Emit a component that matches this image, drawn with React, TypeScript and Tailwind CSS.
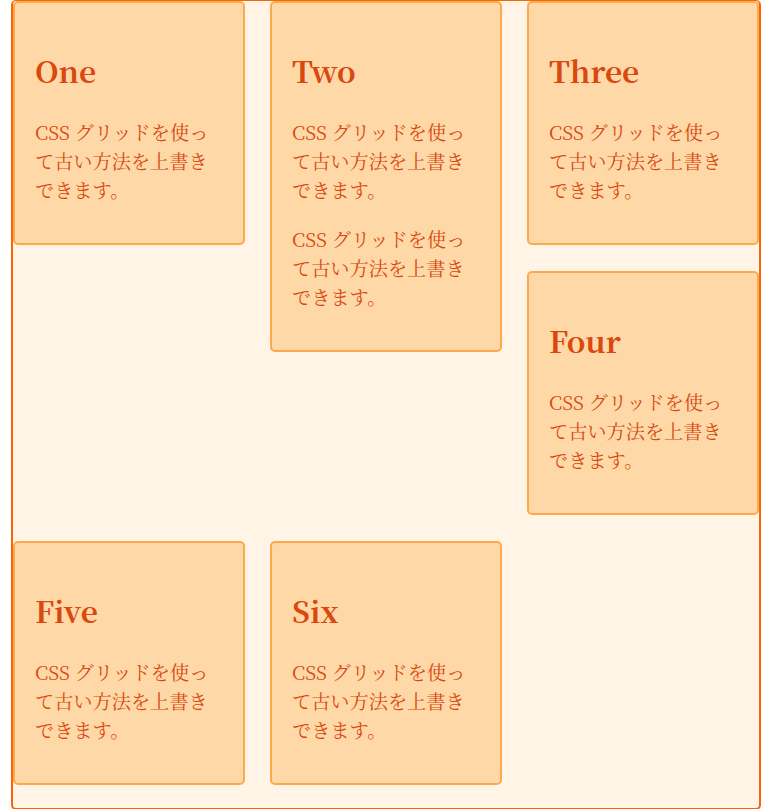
const items = [
  { title: "One", paras: 1, place: "col-start-1 row-start-1" },
  { title: "Two", paras: 2, place: "col-start-2 row-start-1 row-span-2" },
  { title: "Three", paras: 1, place: "col-start-3 row-start-1" },
  { title: "Four", paras: 1, place: "col-start-3 row-start-2" },
  { title: "Five", paras: 1, place: "col-start-1 row-start-3" },
  { title: "Six", paras: 1, place: "col-start-2 row-start-3" },
];

const text = "CSS グリッドを使って古い方法を上書きできます。";

function Card({ title, paras, place }: { title: string; paras: number; place: string }) {
  return (
    <div className={`${place} bg-[#ffd8a8] border-2 border-[#ffa94d] rounded-[5px] px-[20px] pt-[20px] pb-[19.6px] text-[#d9480f]`}>
      <h2 className="mt-[28px] mb-[28px] text-[30px] leading-[39px] font-bold">{title}</h2>
      {Array.from({ length: paras }).map((_, i) => (
        <p key={i} className={i === 0 ? "my-[19px] text-[19.2px] leading-[28.8px]" : "mt-[21px] mb-[19px] text-[19.2px] leading-[28.8px]"}>
          {text}
        </p>
      ))}
    </div>
  );
}

export default function App() {
  return (
    <div
      className="min-h-screen bg-white"
      style={{ fontFamily: '"Noto Serif CJK JP", "Noto Serif JP", "Liberation Serif", "Noto Sans CJK JP", serif' }}
    >
      <div className="ml-[11px] w-[750px] border-2 border-t-[1px] border-[#f76707] rounded-[5px] bg-[#fff4e6] pb-[23px]">
        <div className="grid grid-cols-3 gap-x-[25px] gap-y-[26px] items-start">
          {items.map((it) => (
            <Card key={it.title} {...it} />
          ))}
        </div>
      </div>
    </div>
  );
}
